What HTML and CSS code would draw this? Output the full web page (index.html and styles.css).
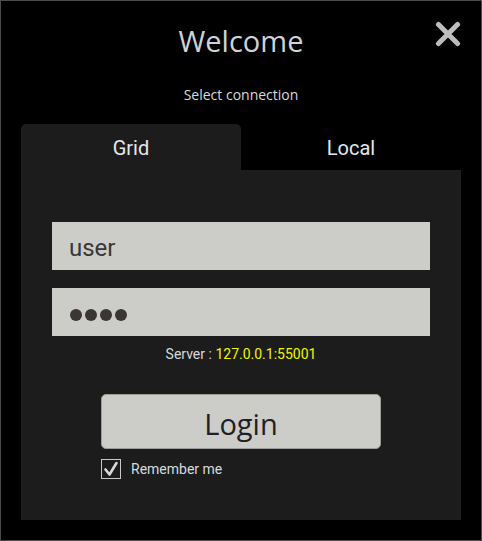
FILE: index.html
```html
<!DOCTYPE html>
<html>
<head>
<meta charset="utf-8">
<link rel="stylesheet" href="styles.css">
</head>
<body>
<div class="window">
  <header class="head">
    <h1 class="title">Welcome</h1>
    <button class="close" aria-label="Close">
      <svg width="26" height="26" viewBox="0 0 26 26"><path d="M3.5 3.5 L22.5 22.5 M22.5 3.5 L3.5 22.5" stroke="#bdbdbd" stroke-width="5" stroke-linecap="round"/></svg>
    </button>
  </header>
  <p class="subtitle">Select connection</p>
  <div class="tabs">
    <div class="tab active">Grid</div>
    <div class="tab">Local</div>
  </div>
  <section class="panel">
    <div class="field">user</div>
    <div class="field pass"><span class="dot"></span><span class="dot"></span><span class="dot"></span><span class="dot"></span></div>
    <p class="server">Server : <span class="addr">127.0.0.1:55001</span></p>
    <button class="login">Login</button>
    <label class="remember">
      <span class="check"><svg width="18" height="18" viewBox="0 0 18 18"><path d="M3.5 9.5 L7.5 14.5 L14.5 3" fill="none" stroke="#d8d8d8" stroke-width="2.6" stroke-linecap="round" stroke-linejoin="round"/></svg></span>
      <span class="remember-text">Remember me</span>
    </label>
  </section>
</div>
</body>
</html>
```
FILE: styles.css
```css
* { box-sizing: border-box; }
html, body { margin: 0; padding: 0; background: #000; }
.window {
  width: 482px;
  height: 541px;
  border: 1px solid #4a4a4a;
  background: #000;
  display: flex;
  flex-direction: column;
  align-items: center;
  padding: 0 20px;
  position: relative;
}
.head {
  width: 100%;
  display: flex;
  justify-content: center;
  padding-top: 20px;
}
.title {
  margin: 0;
  font-family: "Open Sans", "Noto Sans", sans-serif;
  font-weight: 400;
  font-size: 29px;
  line-height: 40px;
  color: #cdd3d8;
}
.close {
  position: absolute;
  top: 20px;
  right: 20px;
  width: 26px;
  height: 26px;
  padding: 0;
  border: 0;
  background: none;
}
.close svg { display: block; }
.subtitle {
  margin: 24px 0 0;
  font-family: "Open Sans", "Noto Sans", sans-serif;
  font-size: 14px;
  line-height: 20px;
  color: #d6dadd;
}
.tabs {
  margin-top: 19px;
  width: 440px;
  display: flex;
}
.tab {
  flex: 1;
  height: 46px;
  display: flex;
  align-items: center;
  justify-content: center;
  font-family: Roboto, sans-serif;
  font-size: 20px;
  color: #e4e8ec;
  border-radius: 5px 5px 0 0;
  padding-top: 2px;
}
.tab.active { background: #1c1c1c; }
.panel {
  width: 440px;
  height: 350px;
  background: #1c1c1c;
  display: flex;
  flex-direction: column;
  align-items: center;
  padding-top: 52px;
}
.field {
  width: 378px;
  height: 48px;
  background: #cccdc8;
  font-family: Roboto, sans-serif;
  font-size: 24px;
  color: #3a3636;
  display: flex;
  align-items: center;
  padding-left: 17px;
  padding-top: 3px;
}
.field.pass {
  margin-top: 18px;
  gap: 3px;
  padding-left: 18px;
  padding-top: 6px;
}
.dot {
  width: 12px;
  height: 12px;
  border-radius: 50%;
  background: #3a3636;
}
.server {
  margin: 8px 0 0;
  font-family: Roboto, sans-serif;
  font-size: 14px;
  line-height: 20px;
  color: #d6dadd;
}
.addr { color: #f2f600; }
.login {
  margin-top: 30px;
  width: 280px;
  height: 55px;
  background: #cccdc8;
  border: 1px solid #9c9d99;
  border-radius: 5px;
  font-family: "Open Sans", "Noto Sans", sans-serif;
  font-size: 29px;
  color: #1f2025;
  padding: 4px 0 0;
}
.remember {
  width: 280px;
  margin-top: 10px;
  display: flex;
  align-items: center;
  gap: 10px;
}
.check {
  width: 20px;
  height: 20px;
  border: 1px solid #c8c8c8;
  display: flex;
  align-items: center;
  justify-content: center;
}
.check svg { display: block; }
.remember-text {
  font-family: Roboto, sans-serif;
  font-size: 14px;
  color: #d6dadd;
}
```
